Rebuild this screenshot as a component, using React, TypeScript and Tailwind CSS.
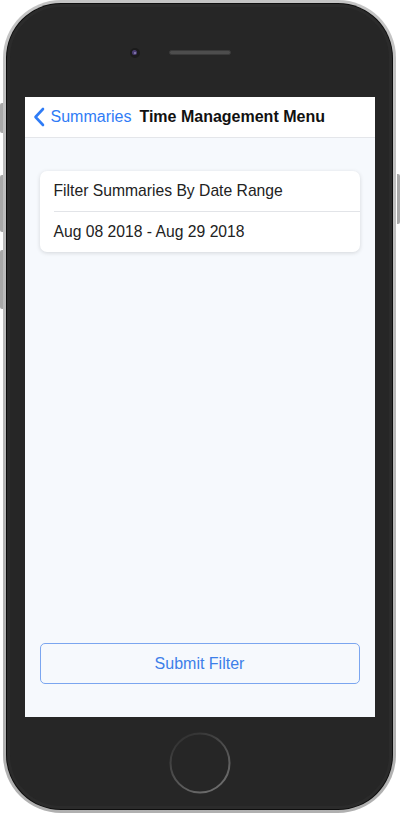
import React from 'react';

const SideButton: React.FC<{ className: string }> = ({ className }) => (
  <div className={`absolute w-[3px] bg-[#a9a9a9] ${className}`}></div>
);

const Camera: React.FC = () => (
  <div className="w-[10px] h-[10px] rounded-full bg-[#1b1b1b] flex items-center justify-center">
    <div className="w-[5px] h-[5px] rounded-full bg-[#4b3d72] flex items-center justify-center">
      <div className="w-[2px] h-[2px] rounded-full bg-[#8f84b8]"></div>
    </div>
  </div>
);

const HomeButton: React.FC = () => (
  <svg width="62" height="62" viewBox="0 0 62 62">
    <defs>
      <linearGradient id="ring" x1="0" y1="0" x2="0.6" y2="1">
        <stop offset="0" stopColor="#2a2a2a" />
        <stop offset="0.5" stopColor="#4a4a4a" />
        <stop offset="1" stopColor="#6a6a6a" />
      </linearGradient>
    </defs>
    <circle cx="31" cy="31" r="29.5" fill="#262626" stroke="url(#ring)" strokeWidth="2" />
  </svg>
);

const App: React.FC = () => {
  return (
    <div className="relative w-[400px] h-[814px] bg-white font-['Liberation_Sans',Arial,sans-serif]">
      {/* side buttons */}
      <SideButton className="left-0 top-[103px] h-[30px] rounded-l-[2px]" />
      <SideButton className="left-0 top-[175px] h-[57px] rounded-l-[2px]" />
      <SideButton className="left-0 top-[250px] h-[59px] rounded-l-[2px]" />
      <SideButton className="right-0 top-[174px] h-[50px] rounded-r-[2px]" />

      {/* phone body */}
      <div className="ml-[3px] w-[393px] h-[813px] rounded-[58px] bg-gradient-to-b from-[#c4c4c4] to-[#b0b0b0] p-[3px]">
        <div className="w-full h-full rounded-[55px] bg-[#0e0e0e] p-[1px]">
          <div className="w-full h-full rounded-[54px] bg-[#262626] border-[3px] border-[#2b2b2b] flex flex-col items-center">
            {/* top bezel */}
            <div className="h-[90px] w-full flex items-center justify-center gap-[29px] pt-[1px]">
              <Camera />
              <div className="w-[62px] h-[5px] rounded-full bg-[#4d4d4d] border border-[#3a3a3a]"></div>
              <div className="w-[10px]"></div>
            </div>

            {/* screen */}
            <div className="w-[350px] h-[620px] bg-[#f6f9fd] flex flex-col">
              <div className="h-[41px] bg-white border-b border-[#e4e6ea] flex items-center pl-[8px]">
                <svg width="12" height="20" viewBox="0 0 12 20">
                  <polyline points="10,2 2.5,10 10,18" fill="none" stroke="#2f7cf6" strokeWidth="2.6" strokeLinecap="round" strokeLinejoin="round" />
                </svg>
                <span className="ml-[6px] text-[16px] text-[#2f7cf6]">Summaries</span>
                <span className="ml-[8px] text-[16px] font-bold text-[#111]">Time Management Menu</span>
              </div>

              <div className="flex-1 flex flex-col px-[15px] pt-[33px] pb-[33px]">
                <div className="bg-white rounded-[7px] shadow-[0_1px_4px_rgba(0,0,0,0.14)]">
                  <div className="h-[40px] flex items-center pl-[14px] text-[15.7px] text-[#222]">
                    Filter Summaries By Date Range
                  </div>
                  <div className="ml-[14px] h-px bg-[#e2e4e8]"></div>
                  <div className="h-[40px] flex items-center pl-[14px] text-[15.7px] text-[#222]">
                    Aug 08 2018 - Aug 29 2018
                  </div>
                </div>

                <div className="flex-1"></div>

                <button className="h-[41px] rounded-[5px] border border-[#7ba6f0] text-[16px] text-[#3d7fe9] bg-transparent">
                  Submit Filter
                </button>
              </div>
            </div>

            {/* bottom bezel */}
            <div className="flex-1 w-full flex items-center justify-center pt-[2px]">
              <HomeButton />
            </div>
          </div>
        </div>
      </div>
    </div>
  );
};

export default App;
